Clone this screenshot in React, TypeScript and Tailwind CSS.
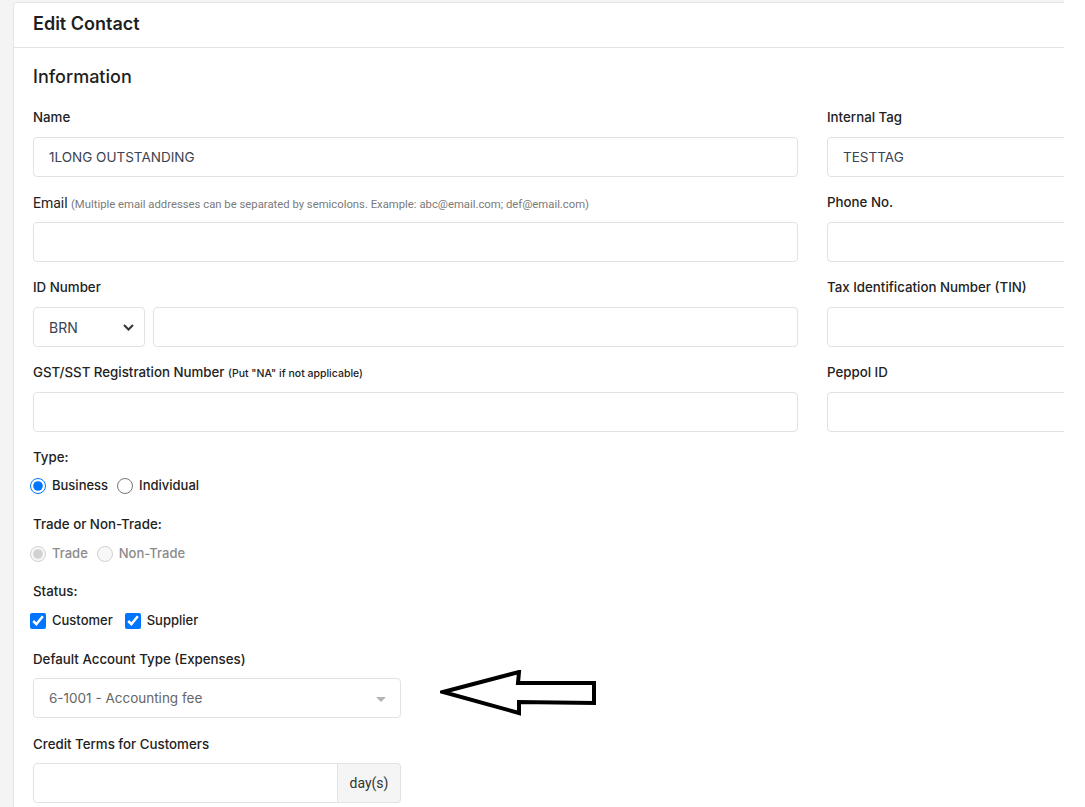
import React from "react";

const font = { fontFamily: "Inter, 'Noto Sans', sans-serif" };
const roboto = { fontFamily: "Roboto, 'Liberation Sans', sans-serif" };

const inputCls =
  "block w-full h-10 px-[15px] border border-[#e2e2e2] rounded-[4px] bg-white text-[13.5px] text-[#3d4250] outline-none";

function Label({ children, className = "" }: { children: React.ReactNode; className?: string }) {
  return (
    <div className={"h-5 flex items-center text-[13.3px] font-medium text-[#222] " + className}>
      {children}
    </div>
  );
}

function Field({
  label,
  value = "",
  children,
}: {
  label: React.ReactNode;
  value?: string;
  children?: React.ReactNode;
}) {
  return (
    <div className="mb-[16px]">
      <Label className="mb-[9px] whitespace-nowrap">{label}</Label>
      {children ?? <input className={inputCls} defaultValue={value} readOnly />}
    </div>
  );
}

function Radio({
  label,
  checked,
  disabled,
}: {
  label: string;
  checked?: boolean;
  disabled?: boolean;
}) {
  return (
    <label className="flex items-center mr-3">
      <input
        type="radio"
        defaultChecked={checked}
        disabled={disabled}
        className="w-4 h-4 m-0 ml-[-3px]"
      />
      <span className={"ml-[6px] text-[13px] font-medium " + (disabled ? "text-[#8a8a8a]" : "text-[#222]")}>
        {label}
      </span>
    </label>
  );
}

function Check({ label }: { label: string }) {
  return (
    <label className="flex items-center mr-[15px]">
      <input type="checkbox" defaultChecked className="w-4 h-4 m-0 ml-[-3px]" />
      <span className="ml-[6px] text-[13px] font-medium text-[#222]">{label}</span>
    </label>
  );
}

export default function App() {
  return (
    <div className="w-[1085px] h-[807px] bg-white overflow-hidden flex" style={font}>
      <div className="w-[1064px] h-full bg-[#f4f4f4] overflow-hidden pt-[2px] pl-[13px] shrink-0">
        <div className="w-[1100px] h-[900px] bg-white border border-[#e6e6e6] rounded-tl-[4px]">
          <div className="h-[45px] px-[19px] pb-1 flex items-center border-b border-[#e3e3e3]">
            <h1 className="text-[18px] font-semibold text-[#1f1f1f]">Edit Contact</h1>
          </div>

          <div className="px-[19px] pt-4">
            <h2 className="h-6 flex items-center text-[18px] font-medium text-[#1f1f1f] mb-[20px]">
              Information
            </h2>

            <div className="grid grid-cols-[765px_300px] gap-x-[29px]">
              <Field label="Name" value="1LONG OUTSTANDING" />
              <Field label="Internal Tag" value="TESTTAG" />

              <Field
                label={
                  <span style={roboto} className="font-normal">
                    <span className="text-[14px] text-[#222]">Email</span>{" "}
                    <span className="text-[11.3px] text-[#7a7a7a]">
                      (Multiple email addresses can be separated by semicolons. Example: abc@email.com; def@email.com)
                    </span>
                  </span>
                }
              />
              <Field label="Phone No." />

              <Field label="ID Number">
                <div className="flex gap-[8px]">
                  <div className="w-[112px] h-10 px-[15px] border border-[#e2e2e2] rounded-[4px] flex items-center justify-between text-[14px] text-[#3d4250] shrink-0">
                    <span>BRN</span>
                    <svg width="11" height="7" viewBox="0 0 11 7" className="mr-[-5px]">
                      <path d="M1 1l4.5 4.5L10 1" fill="none" stroke="#333" strokeWidth="2" />
                    </svg>
                  </div>
                  <input className={inputCls} readOnly />
                </div>
              </Field>
              <Field label="Tax Identification Number (TIN)" />

              <Field
                label={
                  <span>
                    GST/SST Registration Number{" "}
                    <span className="text-[10.5px] font-medium">(Put "NA" if not applicable)</span>
                  </span>
                }
              />
              <Field label="Peppol ID" />
            </div>

            <Label className="mb-2">Type:</Label>
            <div className="h-5 flex items-center mb-[19px]">
              <Radio label="Business" checked />
              <Radio label="Individual" />
            </div>

            <Label className="mb-[9px]">Trade or Non-Trade:</Label>
            <div className="h-5 flex items-center mb-[18px]">
              <Radio label="Trade" checked disabled />
              <Radio label="Non-Trade" disabled />
            </div>

            <Label className="mb-[9px]">Status:</Label>
            <div className="h-5 flex items-center mb-[19px]">
              <Check label="Customer" />
              <Check label="Supplier" />
            </div>

            <Label className="mb-[8px]">Default Account Type (Expenses)</Label>
            <div className="h-10 flex items-start mb-[17px]">
              <div className="w-[368px] h-10 px-[15px] border border-[#e2e2e2] rounded-[4px] flex items-center justify-between text-[13.5px] text-[#666] shrink-0">
                <span>6-1001 - Accounting fee</span>
                <svg width="10" height="5" viewBox="0 0 10 5" className="mr-[-1px] mt-[3px]">
                  <path d="M0 0h10L5 5z" fill="#b5b5b5" />
                </svg>
              </div>
              <svg width="160" height="48" viewBox="0 0 160 48" className="ml-[39px] mt-[-8px] shrink-0">
                <path
                  d="M3 22 L79 2 L78 13 L154 13 L154 33 L79 32 L79 43 Z"
                  fill="none"
                  stroke="#000"
                  strokeWidth="4"
                  strokeLinejoin="miter"
                />
              </svg>
            </div>

            <Label className="mb-[8px]">Credit Terms for Customers</Label>
            <div className="w-[368px] h-10 flex">
              <input className="flex-1 min-w-0 h-10 border border-[#e2e2e2] rounded-l-[4px] outline-none" readOnly />
              <div
                style={roboto}
                className="w-[63px] h-10 flex items-center justify-center border border-l-0 border-[#e2e2e2] rounded-r-[4px] bg-[#f5f5f5] text-[14px] text-[#333]"
              >
                day(s)
              </div>
            </div>
          </div>
        </div>
      </div>
    </div>
  );
}
